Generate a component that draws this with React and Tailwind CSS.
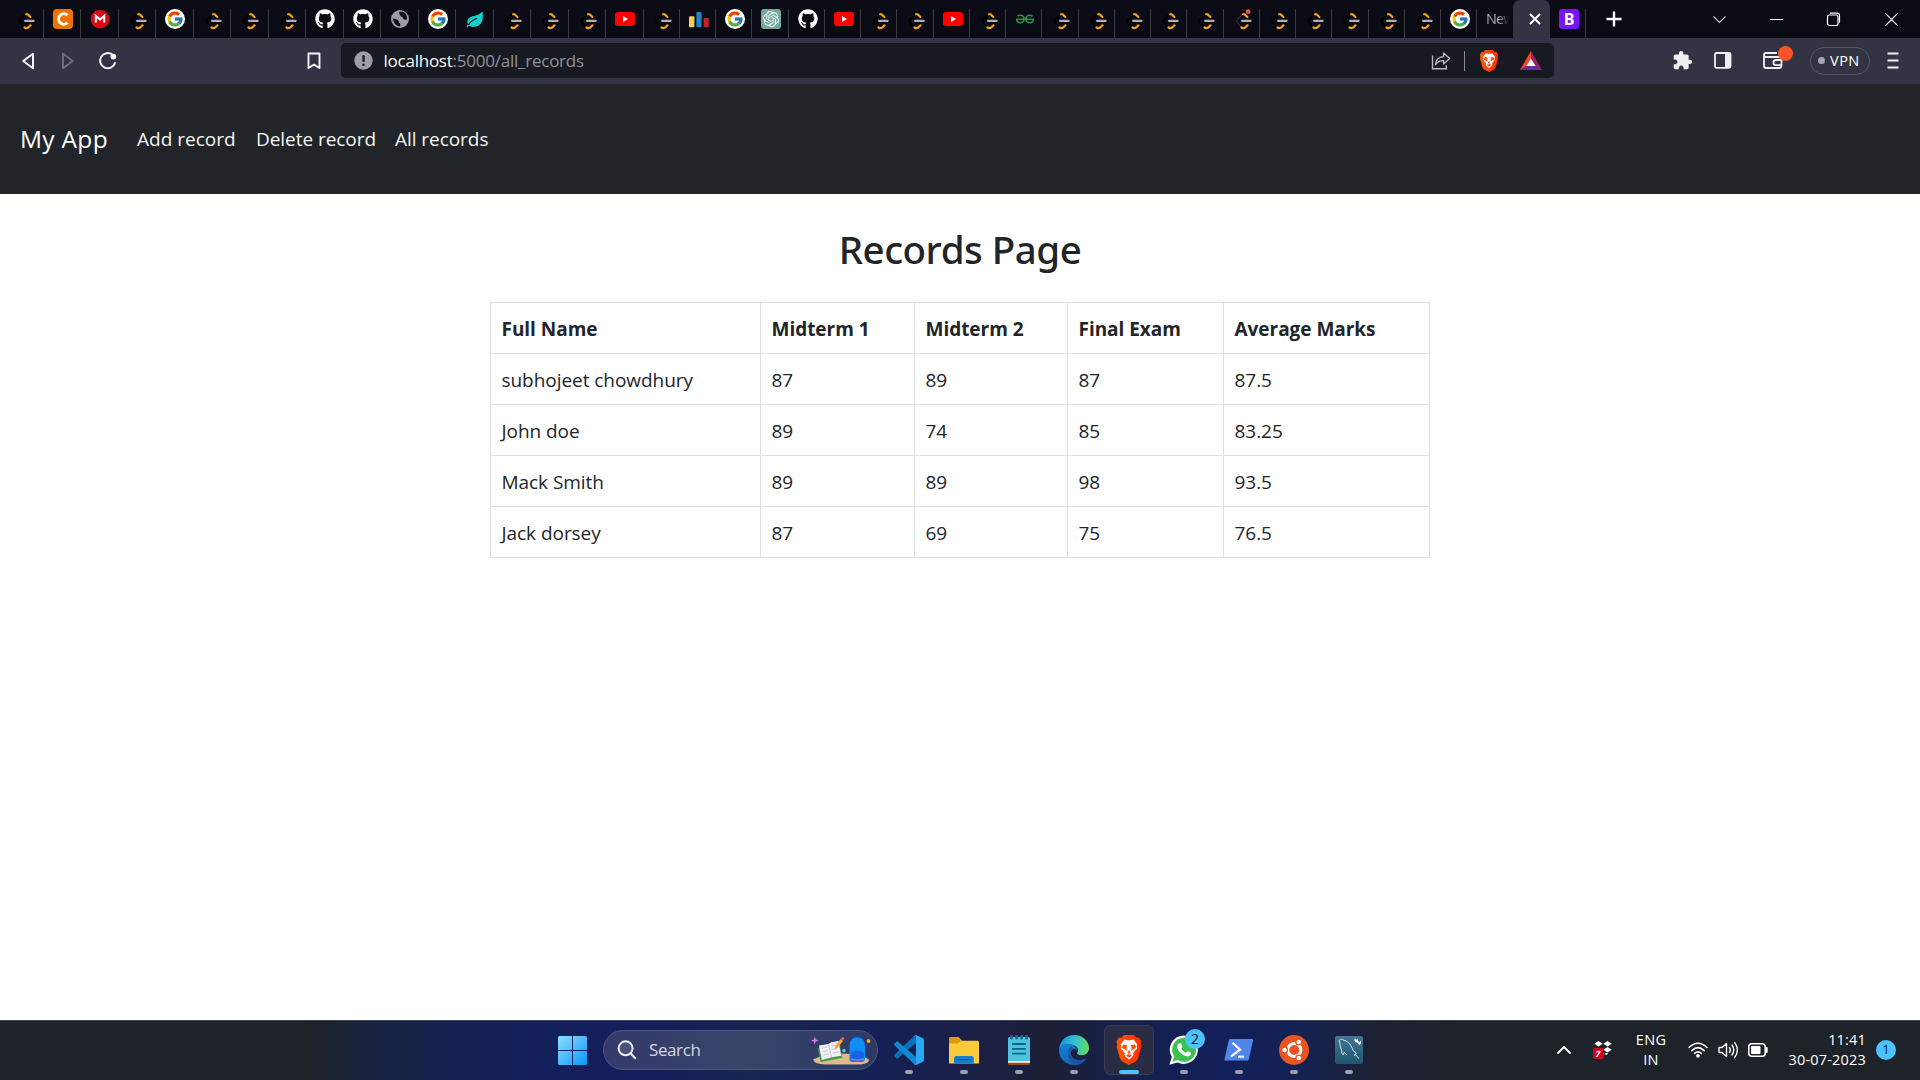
import React from "react";
import { FcGoogle } from "react-icons/fc";
import { FaGithub } from "react-icons/fa";
import { SiOpenai, SiGeeksforgeeks } from "react-icons/si";
import { MdExtension } from "react-icons/md";

/* ---------- Tab favicons (20x20 box) ---------- */

const LeetCode = ({ alert }) => (
  <svg viewBox="-0.5 -0.3 20 20" className="size-5 overflow-visible" fill="none" strokeLinecap="round">
    <path
      d="M9.8 4.6 3.6 10.2q-1.3 1.4 0 2.8L8 18.2"
      stroke={alert ? "#3a3b40" : "#010103"}
      strokeWidth={alert ? 1 : 2}
    />
    <path d="M9.6 4.9q1.2-.3 2 .6l2.3 2.2" stroke="#f9a01b" strokeWidth="2.2" />
    <path d="M8 18.2q1.8 1.3 3.6.1l2.4-2.3" stroke="#f9a01b" strokeWidth="2.2" />
    <path d="M8.6 11.5h8.5" stroke="#b3b1b0" strokeWidth="2.2" />
    {alert && <circle cx="14.6" cy="2.4" r="2.4" fill="#e25353" />}
  </svg>
);

const GoogleIcon = () => (
  <span className="flex size-5 items-center justify-center rounded-full bg-white">
    <FcGoogle className="size-[18px]" />
  </span>
);

const GithubIcon = () => <FaGithub className="size-5 text-white" />;

const YoutubeIcon = () => (
  <svg viewBox="0 0 20 20" className="size-5">
    <rect y="3" width="20" height="14" rx="3" fill="#ff0000" />
    <path d="M8 7v6l5-3z" fill="#fff" />
  </svg>
);

const CodechefIcon = () => (
  <span className="flex size-5 items-center justify-center rounded-[4px] bg-[#f07300]">
    <svg viewBox="0 0 20 20" className="size-5" fill="none">
      <path d="M14.4 6.2A5.2 5.2 0 1 0 14.4 13.8" stroke="#fff" strokeWidth="2.9" />
    </svg>
  </span>
);

const MegaIcon = () => (
  <svg viewBox="0 0 20 20" className="size-5">
    <circle cx="10" cy="10" r="9.3" fill="#dd0a14" />
    <path d="M5.8 13.4V6.8L10 10.6l4.2-3.8v6.6" fill="none" stroke="#fff" strokeWidth="2" />
  </svg>
);

const GlobeIcon = () => (
  <svg viewBox="0 0 20 20" className="size-5">
    <circle cx="10" cy="10" r="9" fill="#9b9da6" />
    <path d="M2.6 9.6q3 .2 4.6 1.2 1.8.6 1.6 2.6l1.4 1.2v2.8q-5.8.2-7.6-7.8z" fill="#0b0c15" />
    <path d="M9.6 2.6q-1.4 1.8.2 2.8l1.2 2q2 .2 2.4 2.6 1.6 1.4 3.6.2Q17.4 4 12.6 3z" fill="#0b0c15" />
  </svg>
);

const LeafIcon = () => (
  <svg viewBox="0 0 20 20" className="size-5">
    <path d="M17.6 2.4q2 14.400-8.600 15.400-3 .4-5-1-1 .6-1.600 2L1.600 18q.6-1.400 1.200-2.400Q.8 10 6.600 7.400q7-1 11-5z" fill="#12d2cb" />
    <path d="M3.400 16Q6 11.400 12 9.400" stroke="#0b0c15" strokeWidth="1.200" fill="none" />
  </svg>
);

const BarsIcon = () => (
  <svg viewBox="0 0 20 20" className="size-5">
    <rect y="7.300" width="5.400" height="11" rx="1" fill="#f5cf4e" />
    <rect x="7.400" y="3" width="5.200" height="15.300" rx="1" fill="#1b85c8" />
    <rect x="14.600" y="9" width="5.200" height="9.300" rx="1" fill="#c4202e" />
  </svg>
);

const ChatIcon = () => (
  <span className="flex size-5 items-center justify-center rounded-[3px] bg-[#74aa9c]">
    <SiOpenai className="size-4 text-white" />
  </span>
);

const GeeksIcon = () => <SiGeeksforgeeks className="mt-px ml-px size-[18px] text-[#2f8d46]" />;

const BootstrapIcon = () => (
  <span className="flex size-5 items-center justify-center rounded-[3px] bg-[#7a12fb] font-['Open_Sans',sans-serif] text-[16px] leading-5 font-bold text-white">
    B
  </span>
);

const L = LeetCode;
const G = GoogleIcon;
const LAlert = () => <LeetCode alert />;

/* [favicon, tab width] */
const tabs = [
  [L, 37], [CodechefIcon, 37], [MegaIcon, 38], [L, 37], [G, 38], [L, 37], [L, 38], [L, 37],
  [GithubIcon, 38], [GithubIcon, 37], [GlobeIcon, 38], [G, 37], [LeafIcon, 38], [L, 37],
  [L, 38], [L, 37], [YoutubeIcon, 38], [L, 36], [BarsIcon, 36], [G, 36], [ChatIcon, 37],
  [GithubIcon, 36], [YoutubeIcon, 36], [L, 36], [L, 37], [YoutubeIcon, 36], [L, 36],
  [GeeksIcon, 36], [L, 37], [L, 36], [L, 36], [L, 36], [L, 37], [LAlert, 36], [L, 36], [L, 36],
  [L, 37], [L, 36], [L, 36], [G, 36],
];

/* ---------- Brave lion ---------- */

const BraveLion = ({ className }) => (
  <svg viewBox="0 0 26 30" className={className}>
    <defs>
      <linearGradient id="lion" x1="0" x2="1">
        <stop offset="0" stopColor="#ff5601" />
        <stop offset="1" stopColor="#ff2c02" />
      </linearGradient>
    </defs>
    <path d="M8 0h10l2.600 2.800 2.400-.3 2.600 4-.8 3 .6 2-3.600 12.500-2 2.500L13 30l-6.800-3.500-2-2.500L.6 11.500l.6-2-.8-3 2.600-4 2.400.3z" fill="url(#lion)" />
    <path
      d="M8.400 4.600 11 5.200h4l2.600-.6 3.800 5-.8 1.800.6 2-4.200 4.800.6 1.600-1 1.800-3.600 3.200L9.400 21.600l-1-1.800.6-1.600-4.200-4.800.6-2-.8-1.800z"
      fill="#fff"
    />
    <path
      d="m7 9.400 4 .8-.6 3.200.8 2.800-2.400-2-2.800-1.200zM19 9.400l-4 .8.600 3.200-.8 2.800 2.400-2 2.800-1.200zM13 15l1.600 2.800-1.600 1-1.600-1zM10 20.200l3-1.200 3 1.200-3 2.600z"
      fill="#ff4a08"
    />
  </svg>
);

/* ---------- Browser chrome ---------- */

function TabStrip() {
  return (
    <div className="flex h-[38px] items-end bg-[#0a0b14] pl-[7px]">
      {tabs.map(([Icon, width], i) => (
        <div
          key={i}
          className="flex h-[29px] shrink-0 items-start border-r border-[#3c3c3e] pl-[9px]"
          style={{ width }}
        >
          <Icon />
        </div>
      ))}
      <div className="h-[29px] w-9 shrink-0 pl-[9px]">
        <span className="block w-[28px] bg-linear-to-r from-[#b4b5ba] from-45% to-[#0a0b14] to-85% bg-clip-text text-[14.5px] leading-5 tracking-[-0.9px] text-transparent">
          New
        </span>
      </div>
      <div className="flex h-[38px] w-[37px] shrink-0 items-center justify-center rounded-t-[7px] bg-[#323443] pl-[7px]">
        <svg viewBox="0 0 12 12" className="size-3" stroke="#fff" strokeWidth="2" strokeLinecap="round">
          <path d="M1.500 1.500l9 9M10.500 1.500l-9 9" />
        </svg>
      </div>
      <div className="flex h-[29px] w-9 shrink-0 border-r border-[#3c3c3e] pl-[9px]">
        <BootstrapIcon />
      </div>
      <svg viewBox="0 0 16 16" className="mb-[11px] ml-5 size-4 shrink-0" stroke="#fff" strokeWidth="2.400">
        <path d="M8 .5v15M.5 8h15" />
      </svg>
      <div className="ml-auto flex h-[38px] items-center pr-[22px] text-white">
        <svg viewBox="0 0 13 13" className="size-[13px]" fill="none" stroke="#c9c9cd" strokeWidth="1.200">
          <path d="m.5 3.500 6 6 6-6" />
        </svg>
        <svg viewBox="0 0 13 13" className="ml-[44px] size-[13px]" stroke="#fff">
          <path d="M0 6.500h13" />
        </svg>
        <svg viewBox="0 0 13 13" className="ml-[44px] size-[13px] overflow-visible" fill="none" stroke="#fff" strokeWidth="1.200">
          <rect x=".5" y="2" width="10.500" height="10.500" rx="2" />
          <path d="M3 .2h7q2.500 0 2.500 2.500v7" />
        </svg>
        <svg viewBox="0 0 13 13" className="ml-[45px] size-[13px]" stroke="#fff" strokeWidth="1.200">
          <path d="M.3.3l12.400 12.400M12.700.3.3 12.700" />
        </svg>
      </div>
    </div>
  );
}

function Toolbar() {
  return (
    <div className="flex h-[46px] items-center bg-[#323443] pb-px">
      <svg viewBox="0 0 14 18" className="ml-[21px] h-[18px] w-[14px]" fill="none" stroke="#f4f4f6" strokeWidth="2" strokeLinejoin="round">
        <path d="M12 1.800v14.400L2.200 9z" />
      </svg>
      <svg viewBox="0 0 14 18" className="ml-[26px] h-[18px] w-[14px]" fill="none" stroke="#6c6e7a" strokeWidth="2" strokeLinejoin="round">
        <path d="M2 1.800v14.400L11.800 9z" />
      </svg>
      <svg viewBox="0 0 20 20" className="ml-[23px] size-5" fill="none">
        <path d="M14.300 3.600A7.600 7.600 0 1 0 17 12" stroke="#f4f4f6" strokeWidth="2" strokeLinecap="round" />
        <circle cx="15.300" cy="5.600" r="2.900" fill="#f4f4f6" />
      </svg>
      <svg viewBox="0 0 14 18" className="ml-[189px] h-[18px] w-[14px]" fill="none" stroke="#f4f4f6" strokeWidth="1.900" strokeLinejoin="round">
        <path d="M1.500 1.500h11V16L7 12.600 1.500 16z" />
      </svg>

      <div className="ml-5 flex h-[35px] w-[1213px] items-center rounded-[5px] bg-[#171a21] pl-[13px] pr-3">
        <svg viewBox="0 0 19 19" className="size-[19px]">
          <circle cx="9.500" cy="9.500" r="9.200" fill="#9c9ea7" />
          <rect x="8.400" y="4" width="2.300" height="7" rx="1" fill="#171a21" />
          <circle cx="9.500" cy="13.800" r="1.300" fill="#171a21" />
        </svg>
        <span className="ml-[10.5px] text-[17px] leading-6 tracking-[-0.24px] text-[#8f9198]">
          <span className="text-white">localhost</span>:5000/all_records
        </span>
        <svg viewBox="0 0 20 19" className="ml-auto h-[19px] w-5" fill="none" stroke="#b9bac0" strokeWidth="1.400">
          <path d="M1.500 4.500v13.300h13.800v-3.500" />
          <path d="M4.600 13.600q.4-7.400 8-8V2l6 5.600-6 5.400V9.600q-5.200-.2-8 4z" strokeLinejoin="round" />
        </svg>
        <span className="ml-[13px] h-5 w-px bg-[#8b8c92]" />
        <BraveLion className="ml-[14px] h-[22px] w-5" />
        <svg viewBox="0 0 22 20" className="ml-[21px] h-5 w-[22px]">
          <path d="M11 0 0 19l11-6z" fill="#ff4724" />
          <path d="M11 0v7l5 9 6 3z" fill="#9e1f63" />
          <path d="M0 19h22l-6-4H6z" fill="#662d91" />
          <path d="m11 7.500 4.600 7.500H6.400z" fill="#fff" />
        </svg>
      </div>

      <MdExtension className="ml-[118px] size-[21px] text-[#f0f0f2]" />
      <svg viewBox="0 0 18 17" className="ml-[21px] h-[17px] w-[18px]" fill="none">
        <rect x="1" y="1" width="15.500" height="14.800" rx="1.500" stroke="#f0f0f2" strokeWidth="1.800" />
        <path d="M11 1h5.500v15H11z" fill="#f0f0f2" />
      </svg>
      <div className="relative ml-[31px] h-[17px] w-5">
        <svg viewBox="0 0 20 17" className="h-[17px] w-5" fill="none" stroke="#f0f0f2" strokeWidth="1.800">
          <path d="M14 1H3Q1 1 1 3v11q0 2 2 2h13q2.500 0 2.500-2.500V7Q18.500 5 16.500 5H3Q1 5 1 3" />
          <path d="M18.500 8h-5.500a2.500 2.500 0 0 0 0 5.200h5.500" />
        </svg>
        <span className="absolute -top-[6px] left-[15px] size-[15px] rounded-full bg-[#fb542b]" />
      </div>
      <div className="ml-[27px] flex h-7 w-[60px] items-center rounded-full border-[1.500px] border-[#55586c] pl-[7px]">
        <span className="size-[7px] rounded-full bg-[#a5a7b8]" />
        <span className="ml-[5px] text-[14.5px] leading-5 tracking-[0.5px] text-white">VPN</span>
      </div>
      <svg viewBox="0 0 12 17" className="ml-[17px] h-[17px] w-3" stroke="#f0f0f2" strokeWidth="1.800">
        <path d="M.5 1.500h11M.5 8.500h11M.5 15.500h11" />
      </svg>
    </div>
  );
}

/* ---------- Web page ---------- */

const headers = ["Full Name", "Midterm 1", "Midterm 2", "Final Exam", "Average Marks"];
const records = [
  ["subhojeet chowdhury", "87", "89", "87", "87.5"],
  ["John doe", "89", "74", "85", "83.25"],
  ["Mack Smith", "89", "89", "98", "93.5"],
  ["Jack dorsey", "87", "69", "75", "76.5"],
];

function Page() {
  return (
    <main className="flex-1 bg-white text-[#212529]">
      <nav className="flex h-[110px] items-center bg-[#212529] pt-px pl-5 text-[19px] text-[#f4f4f5]">
        <a className="w-[117px] text-[24.5px] tracking-[0.3px] text-white">My App</a>
        <a className="w-[119px]">Add record</a>
        <a className="w-[139px] tracking-[-0.05px]">Delete record</a>
        <a className="tracking-[-0.05px]">All records</a>
      </nav>
      <h1 className="mt-[31px] mb-[29px] text-center font-['Noto_Sans','Open_Sans',sans-serif] text-[38.5px] leading-[48px] font-medium tracking-[-0.49px]">
        Records Page
      </h1>
      <table className="mx-auto w-[940px] table-fixed border-collapse text-left text-[19px] leading-[30px]">
        <colgroup>
          <col className="w-[270px]" />
          <col className="w-[154px]" />
          <col className="w-[153px]" />
          <col className="w-[156px]" />
          <col className="w-[206px]" />
        </colgroup>
        <thead>
          <tr className="h-[51px]">
            {headers.map((h) => (
              <th key={h} className="border border-[#dee2e6] px-[10.500px] pt-[2px] pb-0 font-bold tracking-[-0.03px]">{h}</th>
            ))}
          </tr>
        </thead>
        <tbody>
          {records.map((row) => (
            <tr key={row[0]} className="h-[51px]">
              {row.map((cell, i) => (
                <td key={i} className="border border-[#dee2e6] px-[10.500px] pt-[2px] pb-0 tracking-[-0.05px]">{cell}</td>
              ))}
            </tr>
          ))}
        </tbody>
      </table>
    </main>
  );
}

/* ---------- Taskbar icons ---------- */

const VSCode = () => (
  <svg viewBox="0 0 30 30" className="size-[30px]">
    <path d="M22 0v8L4 23.200q-.8.600-1.600 0L.4 21.400q-.8-.8 0-1.600L20.500.6z" fill="#0d6fb8" />
    <path d="M22 30v-8L4 6.800q-.8-.600-1.600 0L.4 8.600q-.8.8 0 1.600l20.100 19.200z" fill="#1287d4" />
    <path d="m22 0 7 3.200q1 .6 1 1.800v20q0 1.200-1 1.800L22 30q-1.200.2-2-.6.600.400 1.500-.2l.5-.8V1.600L21.500.8Q20.600.2 20 .6 20.800-.2 22 0z" fill="#29a8f2" />
  </svg>
);

const Explorer = () => (
  <svg viewBox="0 0 30 30" className="size-[30px]">
    <path d="M0 3.500Q0 2 1.500 2h8L13 5.500V11H0z" fill="#dd9c06" />
    <path d="M0 8.500h9l3.500-2.800H28.500Q30 5.700 30 7.200V28.500H0z" fill="#fccb3c" />
    <path d="M5 28.500V23.500Q5 21 7.500 21h14.800q2.500 0 2.500 2.500v5z" fill="#1280d2" />
    <path d="M8.500 24.600h13" stroke="#0a519b" strokeWidth="1.200" />
  </svg>
);

const Notepad = () => (
  <svg viewBox="0 0 22 30" className="h-[30px] w-[22px]">
    <path d="M0 26h22v2.500q0 1.500-1.500 1.500h-19Q0 30 0 28.500z" fill="#9a4d13" />
    <path d="M0 24h22v3.800H0z" fill="#f1f3f4" />
    <path d="M0 3.500Q0 2 1.500 2h19Q22 2 22 3.500V26H0z" fill="#4fc3dd" />
    <path d="M4 9h14M4 13.800h14M4 18.600h14" stroke="#08678a" strokeWidth="1.800" />
    <path d="M3.500.8v2.400M8.500.8v2.400M13.500.8v2.400M18.500.8v2.400" stroke="#0f6d8c" strokeWidth="2.800" strokeLinecap="round" />
  </svg>
);

const Edge = () => (
  <svg viewBox="0 0 30 30" className="size-[30px]">
    <defs>
      <linearGradient id="edgeTop" x1="0" y1=".4" x2="1" y2=".5">
        <stop offset="0" stopColor="#1b8fdc" />
        <stop offset=".5" stopColor="#2fc0d4" />
        <stop offset="1" stopColor="#62dd5a" />
      </linearGradient>
      <linearGradient id="edgeLow" x1="0" y1="0" x2=".6" y2="1">
        <stop offset="0" stopColor="#1684d8" />
        <stop offset="1" stopColor="#0f62b4" />
      </linearGradient>
    </defs>
    <path d="M0 14.500C.6 6 7 0 15.200 0 24 0 30 6.500 30 13c0 4.500-3.200 7.200-7 7.200-3.500 0-5.400-1.200-5-2.200 1.600-1.400 1.400-5-1-6.600C12 8 3 9 0 14.500z" fill="url(#edgeTop)" />
    <path d="M0 15C1.500 9.200 7 7.800 12 9.400c4 1.200 6.200 3.800 6.200 6-2-3-7-1.200-6.400 3.600.6 5.500 8 8 15.500 4.400C24.600 27.500 20 30 15 30 6.500 30 0 23.500 0 15z" fill="url(#edgeLow)" />
    <path d="M12.200 11.500C7 15 7.600 25.600 16.500 30c4.500-.3 8.500-2.800 10.800-6.600C20 27 12.500 24.400 11.800 19c-.3-2.600.8-4.600 2.600-5.200z" fill="#1a56a0" />
  </svg>
);

const WhatsApp = () => (
  <svg viewBox="0 0 30 30" className="size-[30px]">
    <path d="M15.200.4A14.300 14.300 0 0 0 2.800 22L.4 29.800l8-2.200A14.300 14.300 0 1 0 15.200.4z" fill="#fff" />
    <path d="M15.200 2.800A12 12 0 0 0 5.200 21.400L3.700 26.500l5.200-1.400A12 12 0 1 0 15.200 2.800z" fill="#3fbf4f" />
    <path d="M10.800 8.200c.8-.2 1.300 0 1.600.8l1 2.400c.2.600-.8 1.500-1.200 2 1 2 2.600 3.500 4.800 4.400.6-.4 1.300-1.800 2-1.600l2.600 1.300c.8.500.3 2.400-.6 3.100-2.500 2-6.500.3-9.400-2.500-2.600-2.600-4.200-5.600-3.200-8 .5-1 1.500-1.800 2.400-1.900z" fill="#fff" />
  </svg>
);

const PowerShell = () => (
  <svg viewBox="0 0 30 22" className="h-[22px] w-[30px]">
    <path d="M6.600 0h21.600q1.200 0 .9 1.200l-4.300 19q-.3 1.300-1.600 1.300H1.400q-1.200 0-.9-1.200l4.300-19Q5.200 0 6.600 0z" fill="#5086ec" />
    <path d="m8.500 3.800 7.600 6.800-9.400 7" fill="none" stroke="#fff" strokeWidth="2.200" />
    <path d="M14 17.600h6.200" stroke="#fff" strokeWidth="2" />
  </svg>
);

const Ubuntu = () => (
  <svg viewBox="0 0 30 30" className="size-[30px]">
    <circle cx="15" cy="15" r="15" fill="#e95420" />
    <circle cx="15.300" cy="15" r="6.600" fill="none" stroke="#fff" strokeWidth="3" />
    <g fill="#fff" stroke="#e95420" strokeWidth="1.300">
      <circle cx="5.600" cy="15" r="2.900" />
      <circle cx="19.800" cy="6.900" r="2.900" />
      <circle cx="19.800" cy="23.100" r="2.900" />
    </g>
  </svg>
);

const MySQL = () => (
  <svg viewBox="0 0 28 28" className="size-7">
    <defs>
      <linearGradient id="sqlBg" x1="0" y1="0" x2="0" y2="1">
        <stop offset="0" stopColor="#417796" />
        <stop offset="1" stopColor="#1e5670" />
      </linearGradient>
    </defs>
    <rect width="28" height="28" rx="2" fill="url(#sqlBg)" />
    <path
      d="M4.200 4.800C5 2.600 7.600 3.200 8.800 4.200c5 1.200 7.700 5.500 9.300 10.500l3.200 2.300-1 1.200 3.700 4.500M4.200 4.800c1.200 3 .6 6.200 2.600 9.800-.3 2 .3 3.800 1.400 4.200l1-2.600 2.400 2.600M20 18.200l-.8 1.600"
      fill="none"
      stroke="#dde7ec"
      strokeWidth="1"
    />
    <path d="m19.800 3.300 5.200 5" fill="none" stroke="#fff" strokeWidth="2.200" />
    <path d="M20 5.300h2.500V2.800M23 7.500h2.500V5" fill="none" stroke="#fff" strokeWidth="1" />
  </svg>
);

const BraveApp = () => <BraveLion className="h-[30px] w-[26px]" />;

const SearchArt = () => (
  <svg viewBox="0 0 60 32" className="h-8 w-[60px]">
    <path d="M2 24.500Q14 18 32 18.500t26 6Q58 29.500 46 29.500H14Q3 29 2 24.500z" fill="#dfb98a" />
    <path d="m7 13.500 22-4 2 13.500L9.500 27z" fill="#3f9b4d" />
    <path d="m8 10.500 9.500-1.500q1.500-1 3-1.800L27.500 6l2.700 14.800-9.400 1.400-10 2.800z" fill="#f1eef6" />
    <path d="m17.600 9 3 13.500M11 13l5-.8M12 16.500l5-.8M12.500 20l5-.8M20.500 11l5.500-1M21 14.500l5.500-1M22 18l5.500-1" stroke="#b9b5c6" strokeWidth=".7" />
    <path d="m23.500 14 1-3.500 5-6.500 2.500 2-5 6.500z" fill="#f8a52c" />
    <path d="m29.500 4 1.200-1.500q1-.9 2 0 1.200 1 .3 2L32 6z" fill="#ee5350" />
    <path d="M42.500 3.500Q46-.8 50 3.500" fill="none" stroke="#0f4eb0" strokeWidth="2" />
    <path d="M38.500 11q0-8.500 7.800-8.500T54 11v13q0 3-3 3h-9.500q-3 0-3-3z" fill="#108cf5" />
    <path d="M39.500 20q0-4.500 6.800-4.500T53 20v4q0 2.500-2.500 2.500H42q-2.500 0-2.500-2.500z" fill="#1464e6" />
    <path d="M40 24.200q6.500 1.500 13 0" stroke="#c063f3" strokeWidth="1.500" fill="none" />
    <path d="m3.800 1.500 1 3 3 1-3 1-1 3-1-3-3-1 3-1z" fill="#d678f5" />
    <circle cx="33" cy="15.500" r="1.800" fill="#4fd0d9" />
    <circle cx="57.500" cy="6" r="1.900" fill="#f2ad17" />
  </svg>
);

const apps = [
  { name: "code", Icon: VSCode },
  { name: "files", Icon: Explorer },
  { name: "notes", Icon: Notepad },
  { name: "edge", Icon: Edge },
  { name: "brave", Icon: BraveApp, active: true },
  { name: "whatsapp", Icon: WhatsApp, badge: "2" },
  { name: "powershell", Icon: PowerShell },
  { name: "ubuntu", Icon: Ubuntu },
  { name: "mysql", Icon: MySQL },
];

function Taskbar() {
  return (
    <footer className="flex h-[60px] items-center border-t border-[#3b4650] bg-[linear-gradient(90deg,#1e2229_0px,#1e2229_310px,#17223c_360px,#14234c_430px,#13215a_520px,#141e5c_640px,#152650_750px,#142054_880px,#1a1f45_970px,#1d1f36_1050px,#161f4d_1130px,#12205a_1230px,#142152_1300px,#1d2132_1380px,#1e2229_1450px)] pr-6 pb-px text-white">
      <svg viewBox="0 0 29 29" className="ml-[558px] size-[29px]">
        <defs>
          <linearGradient id="win" x1="0" y1="0" x2="1" y2="1">
            <stop offset="0" stopColor="#8ce0fd" />
            <stop offset="1" stopColor="#0c95f8" />
          </linearGradient>
        </defs>
        <path d="M0 1.500Q0 0 1.500 0H14v14H0zM15 0h12.500Q29 0 29 1.500V14H15zM0 15h14v14H1.500Q0 29 0 27.500zM15 15h14v12.500q0 1.500-1.500 1.500H15z" fill="url(#win)" />
      </svg>
      <div className="ml-4 flex h-10 w-[275px] items-center rounded-full border border-[#4e5680] bg-linear-to-r from-[#353a6b] via-[#36456a] to-[#2f3866] pl-[13px] pr-[6px]">
        <svg viewBox="0 0 20 20" className="size-5" fill="none" stroke="#eceef4" strokeWidth="2" strokeLinecap="round">
          <circle cx="8.600" cy="8.300" r="7" fill="#4b5178" />
          <path d="m13.600 13.300 4.600 5" />
        </svg>
        <span className="ml-3 text-[17px] leading-6 tracking-[-0.4px] text-[#d3d6e2]">Search</span>
        <span className="ml-auto pt-px"><SearchArt /></span>
      </div>
      <div className="ml-[3.500px] flex">
        {apps.map(({ name, Icon, active, badge }) => (
          <div key={name} className="flex w-[55px] justify-center">
            <div
              className={`relative flex h-[50px] w-[50px] flex-col items-center rounded-[6px] ${
                active ? "border border-[#3a3d52] bg-[#292c42] pt-[2px]" : "pt-[3px]"
              }`}
            >
              <div className="flex h-[42px] items-center pt-px"><Icon /></div>
              {badge && (
                <span className="absolute top-1 left-[26px] flex size-5 items-center justify-center rounded-full bg-[#4cc2ff] text-[14px] leading-5 text-[#10202c]">
                  {badge}
                </span>
              )}
              <span
                className={
                  active
                    ? "h-1 w-5 shrink-0 rounded-full bg-[#4cc2ff]"
                    : "h-1 w-2 shrink-0 rounded-full bg-[#9a9eb0]"
                }
              />
            </div>
          </div>
        ))}
      </div>

      <div className="ml-auto flex items-center text-[14.500px] leading-5">
        <svg viewBox="0 0 14 9" className="size-[14px]" fill="none" stroke="#fff" strokeWidth="1.800" strokeLinecap="round" strokeLinejoin="round">
          <path d="M1 7.500 7 1.500l6 6" />
        </svg>
        <div className="relative ml-[23px] h-[18px] w-[18px]">
          <svg viewBox="0 0 18 18" className="size-[18px]" fill="#fff">
            <path d="M4.500 0 8.700 2.700 4.500 5.400.3 2.700zM13.500 0l4.200 2.700-4.200 2.700-4.200-2.700zM13.500 6l4.200 2.700-4.200 2.700-4.200-2.700zM10.500 13l2-1.300 1.700 1-2 1.300z" />
          </svg>
          <span className="absolute top-[6.500px] -left-[1px] flex h-[11px] w-[11px] items-center justify-center rounded-[2px] bg-[#d6001c] text-[9px] leading-none font-bold text-white italic">
            7
          </span>
        </div>
        <div className="ml-6 w-[31px] text-center tracking-[0.3px]">
          <div>ENG</div>
          <div>IN</div>
        </div>
        <svg viewBox="0 0 20 16" className="ml-[21px] h-4 w-5" fill="none" stroke="#fff" strokeWidth="1.600" strokeLinecap="round">
          <path d="M1 5.500q9-8.500 18 0M3.800 8.600q6.200-5.800 12.400 0M6.600 11.400q3.400-3.200 6.800 0" />
          <circle cx="10" cy="13.800" r="1.100" fill="#fff" />
        </svg>
        <svg viewBox="0 0 21 18" className="ml-[10px] h-[18px] w-[21px]" fill="none" stroke="#fff" strokeWidth="1.400" strokeLinecap="round" strokeLinejoin="round">
          <path d="M1 6.500h3l4.500-4v13l-4.500-4H1z" />
          <path d="M11.500 6.500q1.600 2.500 0 5M14 4q3.500 5 0 10M16.600 1.500q5.600 7.500 0 15" />
        </svg>
        <svg viewBox="0 0 20 14" className="ml-[9px] h-[14px] w-5" fill="none">
          <rect x=".8" y=".8" width="16.400" height="12.400" rx="3" stroke="#fff" strokeWidth="1.500" />
          <rect x="3" y="3" width="9.500" height="8" rx="1" fill="#fff" />
          <path d="M18.800 5v4" stroke="#fff" strokeWidth="1.800" strokeLinecap="round" />
        </svg>
        <div className="ml-[21px] text-right tracking-[0.18px]">
          <div>11:41</div>
          <div>30-07-2023</div>
        </div>
        <span className="ml-[10px] flex size-5 items-center justify-center rounded-full bg-[#4cc2ff] text-[12px] leading-5 text-[#10202c]">
          1
        </span>
      </div>
    </footer>
  );
}

export default function App() {
  return (
    <div className="flex h-[1080px] w-[1920px] flex-col overflow-hidden font-['Open_Sans','Noto_Sans',sans-serif]">
      <TabStrip />
      <Toolbar />
      <Page />
      <Taskbar />
    </div>
  );
}
